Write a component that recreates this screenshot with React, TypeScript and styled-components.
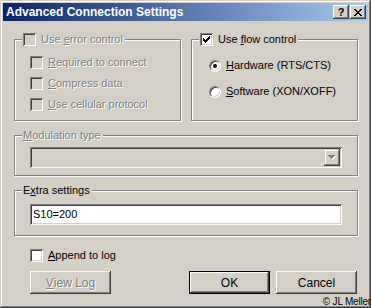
import React from "react";
import styled, { createGlobalStyle } from "styled-components";

const GlobalStyle = createGlobalStyle`
  html, body {
    margin: 0;
    padding: 0;
    background: #d4d0c8;
  }
  body {
    font-family: "Liberation Sans", Arial, sans-serif;
    font-size: 11px;
    color: #000;
  }
`;

const FACE = "#d4d0c8";
const SHADOW = "#808080";
const DARK = "#404040";

const Window = styled.div`
  position: relative;
  width: 371px;
  height: 308px;
  box-sizing: border-box;
  padding: 3px;
  background: ${FACE};
  box-shadow: inset -1px -1px ${DARK}, inset 1px 1px ${FACE},
    inset -2px -2px ${SHADOW}, inset 2px 2px #ffffff;
  display: flex;
  flex-direction: column;
  overflow: hidden;
`;

const TitleBar = styled.div`
  height: 18px;
  display: flex;
  align-items: center;
  padding: 0 2px 0 3px;
  background: linear-gradient(to right, #0a246a, #a6caf0);
`;

const TitleText = styled.span`
  flex: 1;
  color: #fff;
  font-weight: bold;
  font-size: 12px;
`;

const TitleButton = styled.span<{ $gap?: number }>`
  width: 16px;
  height: 14px;
  box-sizing: border-box;
  margin-left: ${(p) => p.$gap ?? 0}px;
  background: ${FACE};
  box-shadow: inset -1px -1px ${DARK}, inset 1px 1px #ffffff,
    inset -2px -2px ${SHADOW}, inset 2px 2px ${FACE};
  display: flex;
  align-items: center;
  justify-content: center;
  font-weight: bold;
  font-size: 11px;
  line-height: 14px;
`;

const Content = styled.div`
  flex: 1;
  display: flex;
  flex-direction: column;
  padding: 12px 10px 0 11px;
`;

const TopRow = styled.div`
  display: grid;
  grid-template-columns: 167px 167px;
  column-gap: 10px;
`;

const Group = styled.fieldset<{ $mt?: number }>`
  margin: ${(p) => p.$mt ?? 0}px 0 0 0;
  padding: 0;
  min-width: 0;
  border: 1px solid ${SHADOW};
  box-shadow: inset 1px 1px #ffffff, 1px 1px 0 #ffffff;
`;

const Legend = styled.legend`
  margin-left: 7px;
  padding: 0 2px 0 1px;
  height: 13px;
  line-height: 13px;
  background: ${FACE};
`;

const LegendRow = styled.span`
  display: flex;
  align-items: center;
  gap: 5px;
`;

const GroupBody = styled.div<{ $pt: number; $pb: number; $gap?: number; $pl?: number }>`
  display: flex;
  flex-direction: column;
  gap: ${(p) => p.$gap ?? 8}px;
  padding: ${(p) => p.$pt}px 15px ${(p) => p.$pb}px ${(p) => p.$pl ?? 15}px;
`;

const Row = styled.div`
  display: flex;
  align-items: center;
  gap: 5px;
  height: 13px;
  line-height: 13px;
`;

const Label = styled.span<{ $disabled?: boolean }>`
  white-space: nowrap;
  color: ${(p) => (p.$disabled ? SHADOW : "#000")};
  text-shadow: ${(p) => (p.$disabled ? "1px 1px 0 #ffffff" : "none")};
`;

const Key = styled.span`
  text-decoration: underline;
  text-underline-offset: 1px;
`;

const Box = styled.span<{ $disabled?: boolean }>`
  flex: none;
  width: 13px;
  height: 13px;
  box-sizing: border-box;
  background: ${(p) => (p.$disabled ? FACE : "#ffffff")};
  box-shadow: inset 1px 1px ${SHADOW}, inset -1px -1px #ffffff,
    inset 2px 2px ${DARK}, inset -2px -2px ${FACE};
  display: flex;
  align-items: center;
  justify-content: center;
`;

const Radio = styled.span`
  flex: none;
  width: 12px;
  height: 12px;
  margin-left: 1px;
  box-sizing: border-box;
  border-radius: 50%;
  border: 1px solid;
  border-color: ${SHADOW} #ffffff #ffffff ${SHADOW};
  background: #ffffff;
  box-shadow: inset 1px 1px ${DARK}, inset -1px -1px ${FACE};
  display: flex;
  align-items: center;
  justify-content: center;
`;

const Dot = styled.span`
  width: 4px;
  height: 4px;
  border-radius: 50%;
  background: #000;
`;

const Field = styled.div<{ $disabled?: boolean }>`
  width: 312px;
  height: 21px;
  box-sizing: border-box;
  padding: 2px;
  background: ${(p) => (p.$disabled ? FACE : "#ffffff")};
  box-shadow: inset 1px 1px ${SHADOW}, inset -1px -1px #ffffff,
    inset 2px 2px ${DARK}, inset -2px -2px ${FACE};
  display: flex;
  align-items: center;
  justify-content: flex-end;
`;

const FieldText = styled.span`
  flex: 1;
  padding-left: 1px;
  line-height: 17px;
`;

const DropButton = styled.span`
  width: 16px;
  height: 17px;
  box-sizing: border-box;
  background: ${FACE};
  box-shadow: inset -1px -1px ${DARK}, inset 1px 1px ${FACE},
    inset -2px -2px ${SHADOW}, inset 2px 2px #ffffff;
  display: flex;
  align-items: center;
  justify-content: center;
`;

const AppendRow = styled(Row)`
  margin: 13px 0 0 16px;
`;

const ButtonRow = styled.div`
  display: flex;
  align-items: center;
  margin-top: 9px;
  padding-left: 16px;
`;

const Button = styled.span<{ $isDefault?: boolean; $disabled?: boolean; $ml?: number }>`
  width: 81px;
  height: 23px;
  box-sizing: border-box;
  margin-left: ${(p) => p.$ml ?? 0}px;
  background: ${FACE};
  border: ${(p) => (p.$isDefault ? "1px solid #000" : "none")};
  box-shadow: inset -1px -1px ${DARK}, inset 1px 1px #ffffff,
    inset -2px -2px ${SHADOW}, inset 2px 2px ${FACE};
  display: flex;
  align-items: center;
  justify-content: center;
  font-size: 12px;
  color: ${(p) => (p.$disabled ? SHADOW : "#000")};
  text-shadow: ${(p) => (p.$disabled ? "1px 1px 0 #ffffff" : "none")};
`;

// watermark that sits over the window's bottom-right corner
const Copyright = styled.span`
  position: absolute;
  right: 0;
  bottom: 1px;
  font-size: 10px;
  line-height: 11px;
  letter-spacing: -0.2px;
  color: #000;
  white-space: nowrap;
`;

const CheckMark = () => (
  <svg width="7" height="7" viewBox="0 0 7 7" shapeRendering="crispEdges">
    {[2, 3, 4, 3, 2, 1, 0].map((top, c) => (
      <rect key={c} x={c} y={top} width="1" height="3" fill="#000" />
    ))}
  </svg>
);

const CloseGlyph = () => (
  <svg width="8" height="7" viewBox="0 0 8 7" shapeRendering="crispEdges">
    <path d="M0 0h2v1h1v1h2v-1h1v-1h2v1h-1v1h-1v1h-1v1h1v1h1v1h1v1h-2v-1h-1v-1h-2v1h-1v1h-2v-1h1v-1h1v-1h1v-1h-1v-1h-1v-1h-1z" fill="#000" />
  </svg>
);

const DownArrow = () => (
  <svg width="8" height="5" viewBox="0 0 8 5" shapeRendering="crispEdges">
    <path d="M1 1h7v1h-1v1h-1v1h-1v1h-1v-1h-1v-1h-1v-1h-1z" fill="#ffffff" />
    <path d="M0 0h7v1h-1v1h-1v1h-1v1h-1v-1h-1v-1h-1v-1h-1z" fill={SHADOW} />
  </svg>
);

type CheckProps = { checked?: boolean; disabled?: boolean; children: React.ReactNode };

const CheckItem = ({ checked, disabled, children }: CheckProps) => (
  <Row>
    <Box $disabled={disabled}>{checked && <CheckMark />}</Box>
    <Label $disabled={disabled}>{children}</Label>
  </Row>
);

const RadioItem = ({ checked, children }: { checked?: boolean; children: React.ReactNode }) => (
  <Row>
    <Radio>{checked && <Dot />}</Radio>
    <Label>{children}</Label>
  </Row>
);

export default function App() {
  return (
    <>
      <GlobalStyle />
      <Window>
        <TitleBar>
          <TitleText>Advanced Connection Settings</TitleText>
          <TitleButton>?</TitleButton>
          <TitleButton $gap={1}>
            <CloseGlyph />
          </TitleButton>
        </TitleBar>
        <Content>
          <TopRow>
            <Group>
              <Legend>
                <LegendRow>
                  <Box $disabled />
                  <Label $disabled>
                    Use <Key>e</Key>rror control
                  </Label>
                </LegendRow>
              </Legend>
              <GroupBody $pt={10} $pb={9}>
                <CheckItem disabled>
                  <Key>R</Key>equired to connect
                </CheckItem>
                <CheckItem disabled>
                  <Key>C</Key>ompress data
                </CheckItem>
                <CheckItem disabled>
                  <Key>U</Key>se cellular protocol
                </CheckItem>
              </GroupBody>
            </Group>
            <Group>
              <Legend>
                <LegendRow>
                  <Box>
                    <CheckMark />
                  </Box>
                  <Label>
                    Use <Key>f</Key>low control
                  </Label>
                </LegendRow>
              </Legend>
              <GroupBody $pt={13} $pb={9} $gap={13} $pl={16}>
                <RadioItem checked>
                  <Key>H</Key>ardware (RTS/CTS)
                </RadioItem>
                <RadioItem>
                  <Key>S</Key>oftware (XON/XOFF)
                </RadioItem>
              </GroupBody>
            </Group>
          </TopRow>

          <Group $mt={8}>
            <Legend>
              <Label $disabled>
                <Key>M</Key>odulation type
              </Label>
            </Legend>
            <GroupBody $pt={5} $pb={7}>
              <Field $disabled>
                <DropButton>
                  <DownArrow />
                </DropButton>
              </Field>
            </GroupBody>
          </Group>

          <Group $mt={8}>
            <Legend>
              <Label>
                E<Key>x</Key>tra settings
              </Label>
            </Legend>
            <GroupBody $pt={7} $pb={10}>
              <Field>
                <FieldText>S10=200</FieldText>
              </Field>
            </GroupBody>
          </Group>

          <AppendRow>
            <Box />
            <Label>
              <Key>A</Key>ppend to log
            </Label>
          </AppendRow>

          <ButtonRow>
            <Button $disabled>
              <Key>V</Key>iew Log
            </Button>
            <Button $isDefault $ml={78}>
              OK
            </Button>
            <Button $ml={6}>Cancel</Button>
          </ButtonRow>
        </Content>
        <Copyright>© JL Meller</Copyright>
      </Window>
    </>
  );
}
